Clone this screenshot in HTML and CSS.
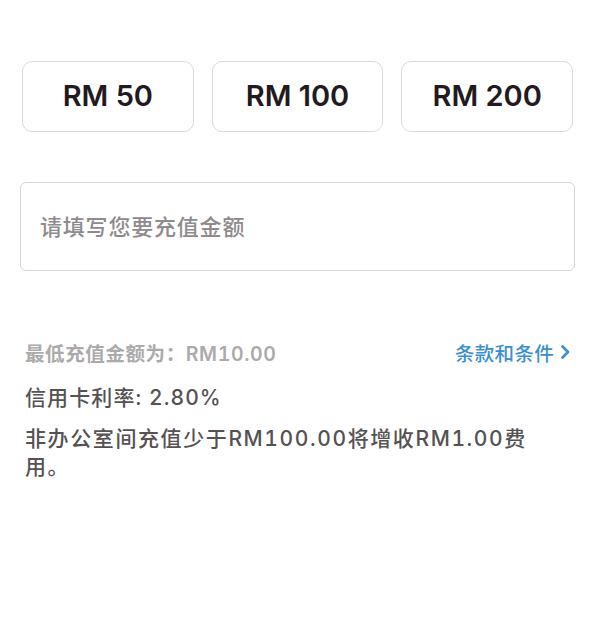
FILE: index.html
```html
<!DOCTYPE html>
<html lang="zh">
<head>
<meta charset="utf-8">
<link rel="stylesheet" href="styles.css">
</head>
<body>
<div class="page">
  <div class="amounts">
    <button class="amount">RM 50</button>
    <button class="amount">RM 100</button>
    <button class="amount">RM 200</button>
  </div>
  <div class="input-box">
    <input class="amount-input" type="text" placeholder="请填写您要充值金额">
  </div>
  <div class="info">
    <div class="row">
      <span class="min">最低充值金额为：RM10.00</span>
      <a class="terms">条款和条件<svg class="chev" width="12" height="16" viewBox="0 0 12 16"><path d="M3.5 2.5 L9 8 L3.5 13.5" fill="none" stroke="currentColor" stroke-width="2.8" stroke-linecap="round" stroke-linejoin="round"/></svg></a>
    </div>
    <p class="rate">信用卡利率: 2.80%</p>
    <p class="note">非办公室间充值少于RM100.00将增收RM1.00费用。</p>
  </div>
</div>
</body>
</html>
```

FILE: styles.css
```css
html, body {
  margin: 0;
  padding: 0;
  background: #fff;
}
body {
  font-family: Inter, "Noto Sans CJK SC", sans-serif;
  font-variant-numeric: tabular-nums;
}
.page {
  padding: 61px 22px 0 20px;
}
.amounts {
  display: grid;
  grid-template-columns: repeat(3, 1fr);
  gap: 18px;
  margin-left: 2px;
}
.amount {
  height: 71px;
  border: 1px solid #dcdadb;
  border-radius: 10px;
  background: #fff;
  font-family: Inter, "Noto Sans CJK SC", sans-serif;
  font-size: 29px;
  font-weight: 600;
  color: #221a1e;
  padding: 0 0 2px;
}
.input-box {
  margin-top: 50px;
  height: 87px;
  border: 1px solid #d6d4d5;
  border-radius: 6px;
  display: flex;
  align-items: center;
  padding: 0 19px;
  margin-right: -2px;
}
.amount-input {
  border: none;
  outline: none;
  width: 100%;
  font-family: Inter, "Noto Sans CJK SC", sans-serif;
  font-size: 22px;
  font-weight: 500;
  letter-spacing: 0.8px;
  color: #333;
  padding: 0;
  background: transparent;
}
.amount-input::placeholder {
  color: #8f8a8d;
}
.info {
  margin-top: 66px;
  padding-left: 5px;
}
.row {
  display: flex;
  justify-content: space-between;
  align-items: center;
  height: 30px;
}
.min {
  font-size: 19.5px;
  letter-spacing: 0.6px;
  color: #acaaab;
  font-weight: 600;
}
.terms {
  display: flex;
  align-items: center;
  gap: 5px;
  font-size: 19.5px;
  letter-spacing: 0.3px;
  color: #3c8fcf;
  font-weight: 500;
  margin-right: 2px;
}
.chev {
  display: block;
}
.rate {
  margin: 17px 0 0;
  font-size: 21px;
  letter-spacing: 1.1px;
  line-height: 28px;
  color: #555253;
  font-weight: 500;
}
.note {
  margin: 13px 0 0;
  font-size: 21px;
  letter-spacing: 1.6px;
  line-height: 28px;
  color: #555253;
  font-weight: 500;
  max-width: 512px;
}
```
